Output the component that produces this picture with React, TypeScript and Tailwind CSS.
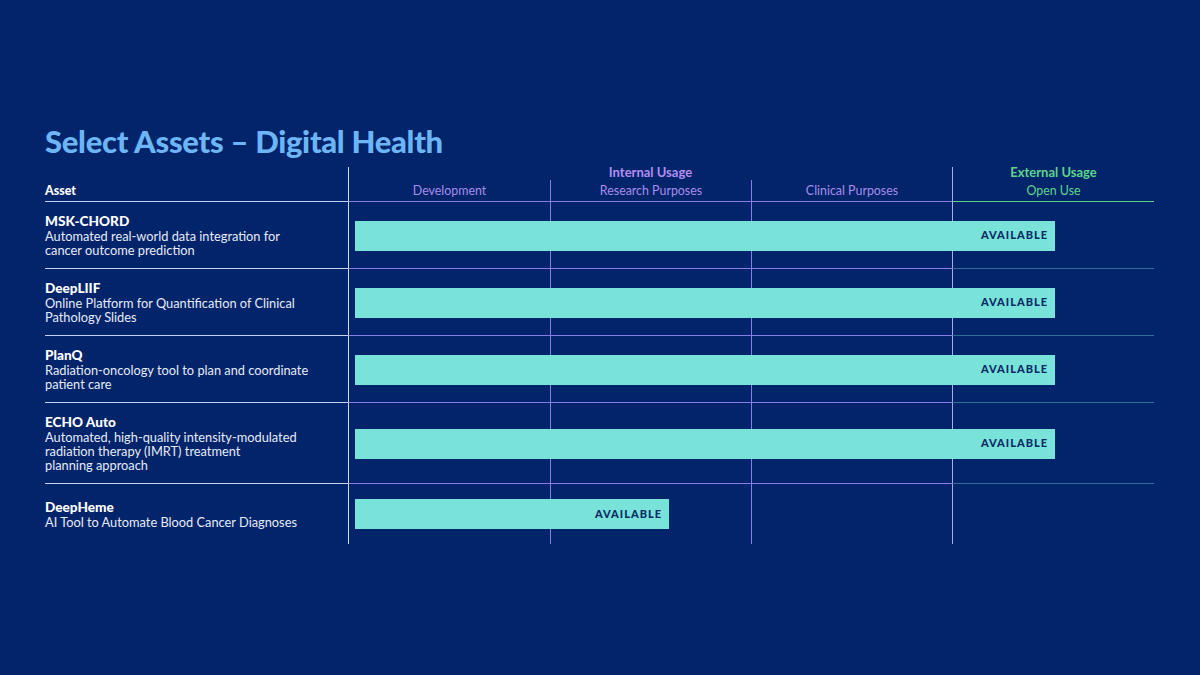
const assets = [
    { name: "MSK-CHORD", desc: ["Automated real-world data integration for", "cancer outcome prediction"], full: true, h: "h-[67px]" },
    { name: "DeepLIIF", desc: ["Online Platform for Quantification of Clinical", "Pathology Slides"], full: true, h: "h-[67px]" },
    { name: "PlanQ", desc: ["Radiation-oncology tool to plan and coordinate", "patient care"], full: true, h: "h-[67px]" },
    { name: "ECHO Auto", desc: ["Automated, high-quality intensity-modulated", "radiation therapy (IMRT) treatment", "planning approach"], full: true, h: "h-[81px]" },
    { name: "DeepHeme", desc: ["AI Tool to Automate Blood Cancer Diagnoses"], full: false, h: "h-[60px]" },
];

export default function App() {
    return (
        <div className="w-[1200px] h-[675px] bg-[#02246a] pl-[45px] pt-[123px] text-white font-['Lato','Open_Sans',sans-serif] overflow-hidden">
            {/* Title */}
            <h1 className="text-[31px] leading-[36px] font-black text-[#6db6f6] tracking-[-0.3px]">
                Select Assets – Digital Health
            </h1>

            <div className="w-[1109px] mt-[8px]">
                {/* Group header */}
                <div className="grid grid-cols-[303px_604px_202px] h-[13px]">
                    <div />
                    <div className="border-l border-[#d0d8f2] relative">
                        <span className="absolute left-0 right-0 top-[-2px] text-center text-[13px] leading-[14px] font-bold text-[#b48ef2]">Internal Usage</span>
                    </div>
                    <div className="border-l border-[#b0a8ee] relative">
                        <span className="absolute left-0 right-0 top-[-2px] text-center text-[13px] leading-[14px] font-bold text-[#5cd48a]">External Usage</span>
                    </div>
                </div>

                {/* Column header */}
                <div className="grid grid-cols-[303px_202px_201px_201px_202px] h-[22px] text-[12.4px] leading-[14px]">
                    <div className="border-b border-[#c8d0f0] font-black flex items-center">Asset</div>
                    <div className="border-l border-[#d0d8f2] border-b border-b-[#8a7ce6] text-[#a98cec] flex items-center justify-center">Development</div>
                    <div className="border-l border-b border-[#8a7ce6] text-[#a98cec] flex items-center justify-center">Research Purposes</div>
                    <div className="border-l border-b border-[#8a7ce6] text-[#a98cec] flex items-center justify-center">Clinical Purposes</div>
                    <div className="border-l border-[#b0a8ee] border-b border-b-[#5cd48a] text-[#5cd48a] flex items-center justify-center">Open Use</div>
                </div>

                {/* Rows */}
                {assets.map((a, idx) => {
                    const last = idx === assets.length - 1;
                    return (
                        <div key={a.name} className={`grid grid-cols-[303px_202px_201px_201px_202px] ${a.h}`}>
                            <div className={`row-start-1 col-start-1 flex flex-col justify-center ${last ? "" : "border-b border-[#c8d0f0]"}`}>
                                <div className="text-[13.6px] leading-[15px] font-black">{a.name}</div>
                                {a.desc.map((d) => (
                                    <div key={d} className="text-[12.8px] leading-[14px] text-[#e6ebf7]">{d}</div>
                                ))}
                            </div>
                            <div className={`row-start-1 col-start-2 border-l border-[#d0d8f2] ${last ? "" : "border-b border-b-[#8a7ce6]"}`} />
                            <div className={`row-start-1 col-start-3 border-l border-[#8a7ce6] ${last ? "" : "border-b"}`} />
                            <div className={`row-start-1 col-start-4 border-l border-[#8a7ce6] ${last ? "" : "border-b"}`} />
                            <div className={`row-start-1 col-start-5 border-l border-[#b0a8ee] ${last ? "" : "border-b border-b-[#2f6f93]"}`} />
                            <div
                                className={`row-start-1 col-start-2 col-end-6 self-center ml-[7px] h-[30px] bg-[#79e3d9] flex items-center justify-end pr-[7px] text-[11px] font-black tracking-[1px] text-[#0b2b66] ${a.full ? "w-[700px]" : "w-[314px]"}`}
                            >
                                AVAILABLE
                            </div>
                        </div>
                    );
                })}
            </div>
        </div>
    );
}
